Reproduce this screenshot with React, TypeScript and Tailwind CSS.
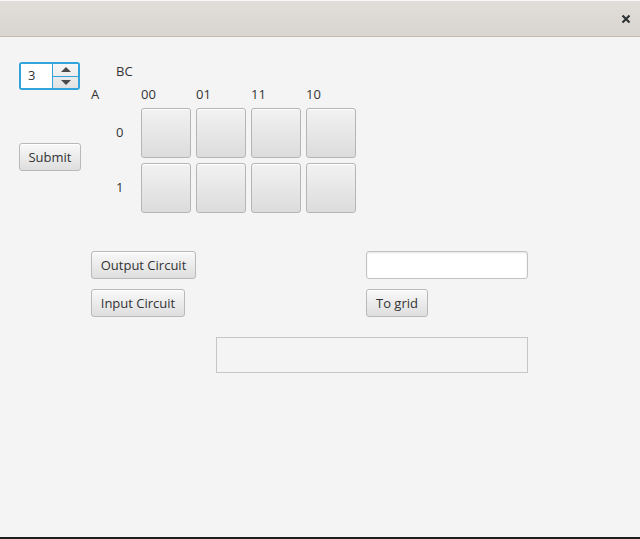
import React from 'react';

const btn =
  'h-[28px] rounded-[3px] border border-[#b9b9b9] bg-gradient-to-b from-[#f9f9f9] to-[#dedede] px-[8px] text-[13px] leading-none text-[#333] shadow-[inset_0_1px_0_#ffffff]';

function Cell() {
  return (
    <button className="h-[50px] w-[50px] rounded-[3px] border border-[#b5b5b5] bg-gradient-to-b from-[#f2f2f2] to-[#dcdcdc] shadow-[inset_0_1px_0_#ffffff]" />
  );
}

function Spinner() {
  return (
    <div className="flex h-[28px] w-[61px] rounded-[3px] border-2 border-[#33a3dc] bg-white">
      <div className="flex w-[31px] items-center bg-white pl-[7px] text-[13px] text-[#333]">3</div>
      <div className="flex w-[26px] flex-col border-l border-[#33a3dc] bg-gradient-to-b from-[#f6f6f6] to-[#e2e2e2]">
        <div className="flex flex-1 items-center justify-center border-b border-[#33a3dc]">
          <div className="h-0 w-0 border-x-[5px] border-b-[5px] border-x-transparent border-b-[#4a4a4a]" />
        </div>
        <div className="flex flex-1 items-center justify-center">
          <div className="h-0 w-0 border-x-[5px] border-t-[5px] border-x-transparent border-t-[#4a4a4a]" />
        </div>
      </div>
    </div>
  );
}

export default function App() {
  const cols = ['00', '01', '11', '10'];
  return (
    <div
      className="flex h-[539px] w-[640px] flex-col bg-[#f4f4f4] text-[13px] text-[#333]"
      style={{ fontFamily: '"Open Sans", "Noto Sans", sans-serif' }}
    >
      {/* title bar */}
      <div className="flex h-[37px] shrink-0 items-center justify-end border-t border-b border-t-[#f8f8f8] border-b-[#c4bcb3] bg-gradient-to-b from-[#e1deda] to-[#d9d5d0] pr-[9px]">
        <svg width="10" height="10" viewBox="0 0 10 10">
          <path d="M1.5 1.5 L8.5 8.5 M8.5 1.5 L1.5 8.5" stroke="#2e3436" strokeWidth="2.2" />
        </svg>
      </div>

      <div className="flex-1">
        <div className="flex pt-[25px]">
          <div className="flex w-[91px] flex-col pl-[19px]">
            <Spinner />
            <button className={`${btn} mt-[53px] w-[62px]`}>Submit</button>
          </div>

          {/* k-map */}
          <div className="flex flex-col">
            <div className="h-[18px] pl-[25px] leading-[18px]">BC</div>
            <div className="mt-[4px] flex h-[20px] items-center leading-[20px]">
              <div className="w-[50px]">A</div>
              <div className="flex gap-[5px]">
                {cols.map((c) => (
                  <div key={c} className="w-[50px]">
                    {c}
                  </div>
                ))}
              </div>
            </div>
            {['0', '1'].map((r, i) => (
              <div key={r} className={`flex items-center ${i === 0 ? 'mt-[4px]' : 'mt-[5px]'}`}>
                <div className="w-[50px] pl-[25px]">{r}</div>
                <div className="flex gap-[5px]">
                  {cols.map((c) => (
                    <Cell key={c} />
                  ))}
                </div>
              </div>
            ))}
          </div>
        </div>

        <div className="mt-[38px] flex pl-[91px]">
          <div className="flex w-[275px] flex-col items-start gap-[10px]">
            <button className={`${btn} w-[105px]`}>Output Circuit</button>
            <button className={`${btn} w-[94px]`}>Input Circuit</button>
          </div>
          <div className="flex flex-col items-start gap-[10px]">
            <input className="h-[28px] w-[162px] rounded-[3px] border border-[#c2c2c2] bg-white px-[7px] shadow-[inset_0_1px_2px_#e4e4e4] outline-none" />
            <button className={`${btn} w-[62px]`}>To grid</button>
          </div>
        </div>

        <div className="mt-[20px] pl-[216px]">
          <div className="h-[36px] w-[312px] border border-[#c6c6c6]" />
        </div>
      </div>

      <div className="h-[2px] shrink-0 bg-[#1e1e1e]" />
    </div>
  );
}
